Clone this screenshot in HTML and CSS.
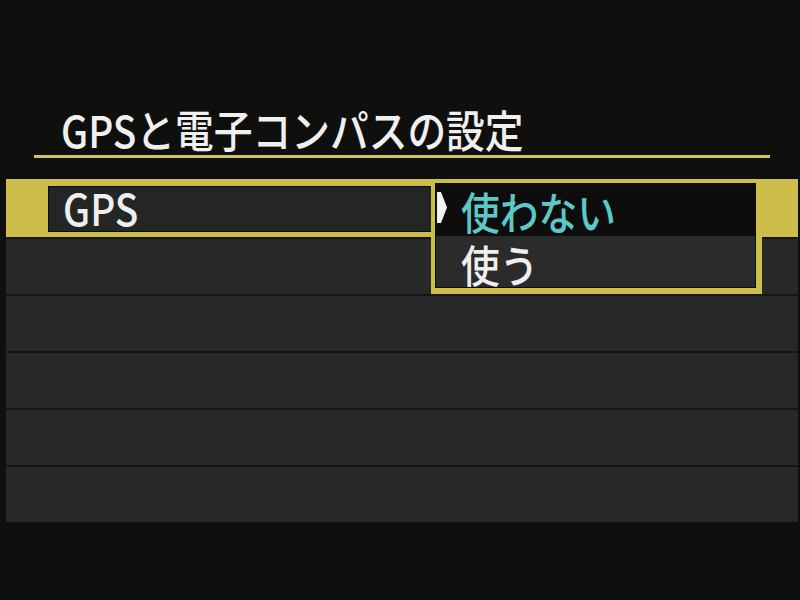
FILE: index.html
```html
<!DOCTYPE html>
<html lang="ja">
<head>
<meta charset="utf-8">
<title>GPSと電子コンパスの設定</title>
<link rel="stylesheet" href="styles.css">
</head>
<body>
<div class="screen">
  <header class="header">
    <h1 class="title"><span class="cond">GPSと電子コンパスの設定</span></h1>
  </header>
  <div class="list">
    <div class="row row-selected">
      <div class="label"><span class="cond">GPS</span></div>
    </div>
    <div class="row"></div>
    <div class="row"></div>
    <div class="row"></div>
    <div class="row"></div>
    <div class="row"></div>

    <div class="popup">
      <div class="option option-active">
        <svg class="cursor" width="10" height="31" viewBox="0 0 10 31"><polygon points="0,0 4,0 10,15.5 4,31 0,31" fill="#f2f2f2"/></svg>
        <span class="cond">使わない</span>
      </div>
      <div class="option">
        <span class="cond">使う</span>
      </div>
    </div>
  </div>
</div>
</body>
</html>
```

FILE: styles.css
```css
* { box-sizing: border-box; }
html, body {
  margin: 0;
  padding: 0;
  width: 800px;
  height: 600px;
  overflow: hidden;
  background: #0f100e;
}
.screen {
  width: 800px;
  height: 600px;
  font-family: "Noto Sans CJK JP", "Noto Sans", sans-serif;
  font-weight: 500;
  color: #eeeeee;
  background: linear-gradient(#0f100d, #0e0f0f);
}
.cond {
  display: inline-block;
  transform: scaleX(0.88);
  transform-origin: left center;
  white-space: nowrap;
}
.header {
  margin-left: 34px;
  width: 736px;
  padding-top: 107px;
  padding-bottom: 4px;
  border-bottom: 3px solid #cfc35c;
}
.title {
  margin: 0 0 0 27px;
  font-size: 44px;
  line-height: 44px;
  font-weight: 500;
  color: #f0f0f0;
}
.list {
  position: relative;
  margin-top: 21px;
  margin-left: 6px;
  width: 792px;
  display: flex;
  flex-direction: column;
  gap: 2px;
  background: #141514;
}
.row {
  height: 55px;
  background: #272928;
}
.row-selected {
  height: 58px;
  background: #cdbd4a;
  padding: 7px 0 5px 42px;
}
.label {
  width: 400px;
  height: 46px;
  background: #242625;
  border: 1px solid #0b0b0b;
  border-right: 0;
  padding-left: 14px;
  font-size: 44px;
  line-height: 40px;
}
.popup {
  position: absolute;
  left: 425px;
  top: 0;
  width: 331px;
  height: 115px;
  border: solid #cdbd4a;
  border-width: 4px 6px 6px 4px;
  background: #0b0b0b;
  padding: 1px;
  display: flex;
  flex-direction: column;
}
.option {
  display: flex;
  align-items: flex-start;
  font-size: 44px;
  line-height: 40px;
  height: 51px;
  padding-left: 25px;
  padding-top: 8px;
  background: #2a2b2a;
  color: #eeeeee;
  position: relative;
}
.option-active {
  height: 52px;
  padding-top: 7px;
  background: #0d0d0d;
  color: #5cc9c6;
}
.cursor {
  position: absolute;
  left: 1px;
  top: 8px;
}
```
